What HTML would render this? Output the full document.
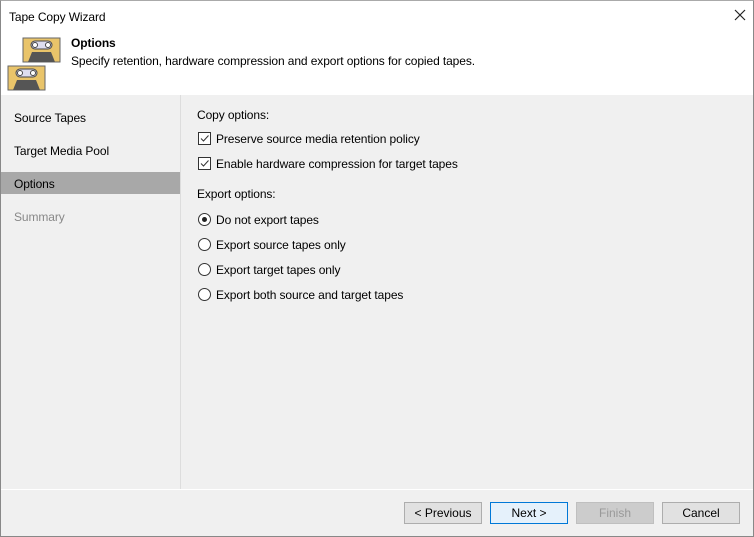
<!DOCTYPE html><html><head><style>
body{margin:0;width:754px;height:537px;overflow:hidden;font-family:"Liberation Sans",sans-serif;font-size:12px;color:#000;background:#fff}
.win{position:absolute;left:0;top:0;width:752px;height:535px;border:1px solid #888;border-top:1px solid #aaa;background:#f0f0f0}
.t{position:absolute;white-space:nowrap;letter-spacing:-0.1px}
.btn{position:absolute;top:501px;width:76px;height:20px;border:1px solid #adadad;background:#e1e1e1;text-align:center;line-height:20px}
.cb{position:absolute;width:11px;height:11px;border:1px solid #333;background:#fff}
.rb{position:absolute;width:11px;height:11px;border:1px solid #333;border-radius:50%;background:#fff}
</style></head><body><div class="win">
<div style="position:absolute;left:0;top:0;width:752px;height:94px;background:#fff"></div>
<div class="t" style="left:8px;top:9px">Tape Copy Wizard</div>
<svg style="position:absolute;left:733px;top:8px" width="12" height="12"><path d="M1 1L11 11M11 1L1 11" stroke="#222" stroke-width="1.2"/></svg>
<svg style="position:absolute;left:21px;top:36px" width="40" height="26"><rect x="1" y="1" width="37" height="24" fill="#e9c46a" stroke="#666"/><rect x="9" y="4" width="21" height="8" rx="4" fill="#dde" stroke="#444"/><circle cx="13" cy="8" r="2.5" fill="#fff" stroke="#444"/><circle cx="26" cy="8" r="2.5" fill="#fff" stroke="#444"/><path d="M6 25 L10 15 H29 L33 25Z" fill="#555"/></svg>
<svg style="position:absolute;left:6px;top:64px" width="40" height="26"><rect x="1" y="1" width="37" height="24" fill="#e9c46a" stroke="#666"/><rect x="9" y="4" width="21" height="8" rx="4" fill="#dde" stroke="#444"/><circle cx="13" cy="8" r="2.5" fill="#fff" stroke="#444"/><circle cx="26" cy="8" r="2.5" fill="#fff" stroke="#444"/><path d="M6 25 L10 15 H29 L33 25Z" fill="#555"/></svg>
<div class="t" style="left:70px;top:35px;font-weight:bold">Options</div>
<div class="t" style="left:70px;top:53px">Specify retention, hardware compression and export options for copied tapes.</div>
<div style="position:absolute;left:179px;top:94px;width:1px;height:394px;background:#ddd"></div>
<div style="position:absolute;left:0;top:488px;width:752px;height:1px;background:#fff"></div>
<div class="t" style="left:13px;top:110px">Source Tapes</div>
<div class="t" style="left:13px;top:143px">Target Media Pool</div>
<div style="position:absolute;left:0;top:171px;width:179px;height:22px;background:#a8a8a8"></div>
<div class="t" style="left:13px;top:176px">Options</div>
<div class="t" style="left:13px;top:209px;color:#888">Summary</div>
<div class="t" style="left:196px;top:107px">Copy options:</div>
<div class="cb" style="left:197px;top:131px"></div><svg style="position:absolute;left:198px;top:132px" width="11" height="11"><path d="M2 5.5L4.5 8L9.5 2.5" fill="none" stroke="#333" stroke-width="1"/></svg>
<div class="t" style="left:215px;top:131px">Preserve source media retention policy</div>
<div class="cb" style="left:197px;top:156px"></div><svg style="position:absolute;left:198px;top:157px" width="11" height="11"><path d="M2 5.5L4.5 8L9.5 2.5" fill="none" stroke="#333" stroke-width="1"/></svg>
<div class="t" style="left:215px;top:156px">Enable hardware compression for target tapes</div>
<div class="t" style="left:196px;top:186px">Export options:</div>
<div class="rb" style="left:197px;top:212px"></div><div style="position:absolute;left:201px;top:216px;width:5px;height:5px;border-radius:50%;background:#222"></div>
<div class="t" style="left:215px;top:212px">Do not export tapes</div>
<div class="rb" style="left:197px;top:237px"></div><div class="t" style="left:215px;top:237px">Export source tapes only</div>
<div class="rb" style="left:197px;top:262px"></div><div class="t" style="left:215px;top:262px">Export target tapes only</div>
<div class="rb" style="left:197px;top:287px"></div><div class="t" style="left:215px;top:287px">Export both source and target tapes</div>
<div class="btn" style="left:403px">&lt; Previous</div>
<div class="btn" style="left:489px;background:#e5f1fb;border-color:#0078d7">Next &gt;</div>
<div class="btn" style="left:575px;background:#ccc;border-color:#bfbfbf;color:#999">Finish</div>
<div class="btn" style="left:661px">Cancel</div>
</div></body></html>
